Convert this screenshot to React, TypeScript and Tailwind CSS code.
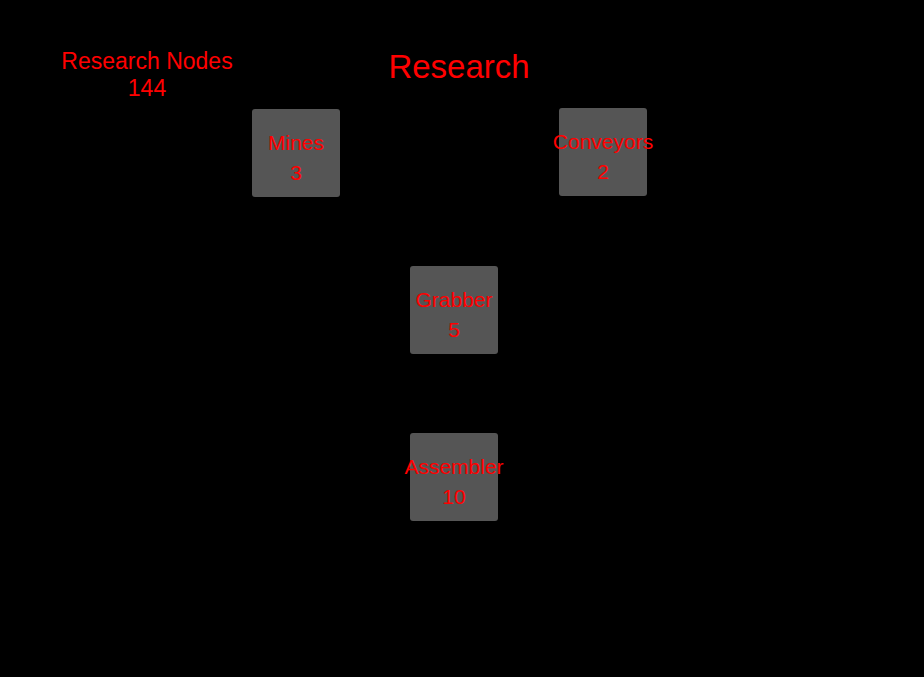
import React from 'react'

interface ResearchNode {
  id: string;
  name: string;
  cost: number;
  x: number;
  y: number;
}

const nodes: ResearchNode[] = [
  { id: 'mines', name: 'Mines', cost: 3, x: 252, y: 109 },
  { id: 'conveyors', name: 'Conveyors', cost: 2, x: 559, y: 108 },
  { id: 'grabber', name: 'Grabber', cost: 5, x: 410, y: 266 },
  { id: 'assembler', name: 'Assembler', cost: 10, x: 410, y: 433 },
];

const NodeBox = ({ node }: { node: ResearchNode }) => (
  <div
    className="absolute w-[88px] h-[88px] bg-[#555555] rounded-[3px] flex flex-col items-center pt-[19px]"
    style={{ left: node.x, top: node.y }}
  >
    <span className="whitespace-nowrap text-[21px] leading-[30px]">{node.name}</span>
    <span className="text-[21px] leading-[30px]">{node.cost}</span>
  </div>
);

export default function App() {
  return (
    <div className="relative w-[924px] h-[677px] bg-black text-[#ff0000] font-['Liberation_Sans',Arial,sans-serif] overflow-hidden">
      {/* points counter */}
      <div className="absolute left-[47px] top-[48px] w-[200px] flex flex-col items-center text-[23px] leading-[27px]">
        <span>Research Nodes</span>
        <span>144</span>
      </div>

      {/* title */}
      <h1 className="absolute left-[359px] top-[47px] w-[200px] text-center text-[33px] leading-[40px]">
        Research
      </h1>

      {nodes.map((node) => (
        <NodeBox key={node.id} node={node} />
      ))}
    </div>
  );
}
